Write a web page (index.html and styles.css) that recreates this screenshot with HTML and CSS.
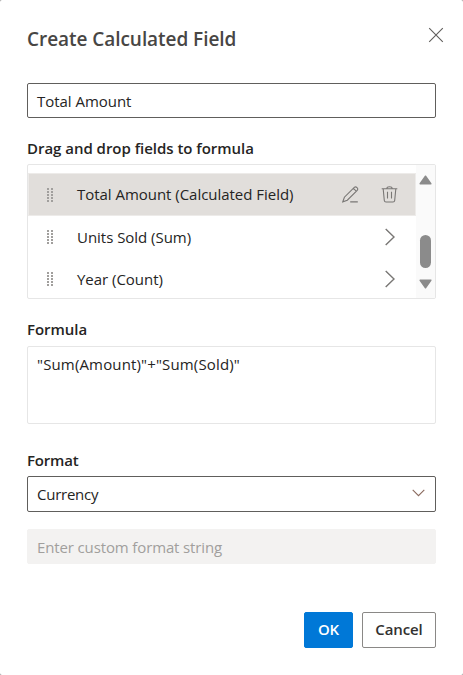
FILE: index.html
```html
<!DOCTYPE html>
<html lang="en">
<head>
<meta charset="utf-8">
<title>Create Calculated Field</title>
<link rel="stylesheet" href="styles.css">
</head>
<body>
<main class="dialog">
  <header class="header">
    <h1 class="title">Create Calculated Field</h1>
    <svg class="close" width="16" height="16" viewBox="0 0 16 16"><path d="M1.2 1.2 14.8 14.8M14.8 1.2 1.2 14.8"/></svg>
  </header>
  <div class="box name"><span>Total Amount</span></div>
  <h2 class="label label-fields">Drag and drop fields to formula</h2>
  <div class="list">
    <div class="rows">
      <div class="row selected">
        <svg class="grip" width="6" height="14" viewBox="0 0 6 14"><path d="M1 0V14M5 0V14"/></svg>
        <span class="text">Total Amount (Calculated Field)</span>
        <svg class="icon edit" width="17" height="17" viewBox="0 0 17 17"><path d="M.8 15.8 2.4 11.2 12.3 1.4Q13.6.3 15 1.6T15.2 4.3L5.3 14.2ZM11.4 2.4 14.2 5.2M8.2 15.9H15.8"/></svg>
        <svg class="icon" width="17" height="17" viewBox="0 0 17 17"><path d="M.7 2.8H16.3M5.8 2.5Q6 .8 8.5.8T11.2 2.5M2.2 3 3.3 14.5Q3.5 16 5 16H12Q13.5 16 13.7 14.5L14.8 3M6.5 5.7V12.5M10.5 5.7V12.5"/></svg>
      </div>
      <div class="row">
        <svg class="grip" width="6" height="14" viewBox="0 0 6 14"><path d="M1 0V14M5 0V14"/></svg>
        <span class="text">Units Sold (Sum)</span>
        <svg class="icon next" width="17" height="18" viewBox="0 0 17 18"><path d="M4.7 1 13 9 4.7 17"/></svg>
      </div>
      <div class="row">
        <svg class="grip" width="6" height="14" viewBox="0 0 6 14"><path d="M1 0V14M5 0V14"/></svg>
        <span class="text">Year (Count)</span>
        <svg class="icon next" width="17" height="18" viewBox="0 0 17 18"><path d="M4.7 1 13 9 4.7 17"/></svg>
      </div>
    </div>
    <div class="scrollbar">
      <svg width="13" height="10" viewBox="0 0 13 10"><path d="M6.5 1.2 11.8 8.8H1.2Z"/></svg>
      <div class="thumb"></div>
      <svg width="13" height="10" viewBox="0 0 13 10"><path d="M6.5 8.8 11.8 1.2H1.2Z"/></svg>
    </div>
  </div>
  <h2 class="label label-formula">Formula</h2>
  <div class="box formula"><span>"Sum(Amount)"+"Sum(Sold)"</span></div>
  <h2 class="label label-format">Format</h2>
  <div class="box select"><span>Currency</span><svg width="13" height="8" viewBox="0 0 13 8"><path d="M.7.8 6.5 6.6 12.3.8"/></svg></div>
  <div class="box custom"><span>Enter custom format string</span></div>
  <footer class="footer">
    <button class="button ok">OK</button>
    <button class="button cancel">Cancel</button>
  </footer>
</main>
</body>
</html>
```
FILE: styles.css
```css
* { box-sizing: border-box; }
body {
  margin: 0;
  background: #999;
  color: #252423;
  font: 15px/20px "Segoe UI", "Open Sans", sans-serif;
  letter-spacing: -0.03px;
}
.dialog {
  display: flex;
  flex-direction: column;
  width: 463px;
  height: 675px;
  padding: 27px 27px 0;
  border-radius: 2px;
  background: #fff;
}
.header {
  display: flex;
  justify-content: space-between;
  height: 56px;
  flex: none;
}
.title {
  margin: 0;
  color: #484644;
  font-size: 19px;
  line-height: 24px;
  font-weight: 600;
  letter-spacing: -0.05px;
}
.close { margin-right: -8px; fill: none; stroke: #605e5c; stroke-width: 1.1; }
.box {
  display: flex;
  align-items: center;
  flex: none;
  height: 35px;
  padding: 0 10px 0 9px;
  border: 1px solid #605e5c;
  border-radius: 2px;
}
.label {
  flex: none;
  height: 20px;
  margin: 0;
  font-size: 15px;
  line-height: 20px;
  font-weight: 600;
  letter-spacing: -0.03px;
}
.label-fields { margin: 20px 0 6px; }
.label-formula { margin: 20px 0 7px; }
.label-format { margin: 26px 0 6px; letter-spacing: -0.2px; }
.list {
  display: flex;
  flex: none;
  height: 135px;
  border: 1px solid #e6e6e6;
  border-radius: 2px;
  overflow: hidden;
}
.rows { flex: 1; padding-top: 8px; }
.row {
  display: flex;
  align-items: center;
  height: 42px;
  padding: 0 18px 0 19px;
}
.row.selected { height: 43px; background: #e1dedb; border: 1px solid #edebe9; padding: 0 17px 0 18px; }
.selected .text { margin-top: -2px; }
.grip { margin-right: 24px; fill: none; stroke: #a19f9d; stroke-width: 2; stroke-dasharray: 2 1; }
.text { flex: 1; white-space: nowrap; }
.icon { fill: none; stroke: #797775; stroke-width: 1.1; }
.edit { margin-right: 22px; }
.next { stroke-width: 1.4; }
.scrollbar {
  display: flex;
  flex-direction: column;
  align-items: center;
  width: 19px;
  padding: 10px 0 9px;
  background: #fafafa;
}
.scrollbar svg { fill: #8b8b8b; stroke: #8b8b8b; stroke-width: 1.5; stroke-linejoin: round; }
.thumb { width: 11px; height: 33px; margin: auto 0 11px; border-radius: 6px; background: #8b8b8b; }
.formula { height: 78px; align-items: flex-start; padding-top: 7px; border-color: #e6e6e6; letter-spacing: 0.15px; }
.select { height: 36px; justify-content: space-between; letter-spacing: -0.25px; }
.select svg { fill: none; stroke: #8a6a5e; stroke-width: 1.1; margin-top: -3px; }
.custom { margin-top: 17px; color: #a19f9d; background: #f3f2f1; border-color: #f3f2f1; letter-spacing: -0.13px; }
.footer { display: flex; justify-content: flex-end; gap: 9px; margin-top: 48px; }
.button {
  height: 36px;
  padding: 0 0 2px;
  border: 1px solid #8a8886;
  border-radius: 2px;
  background: #fff;
  color: #323130;
  font: 600 15px/20px "Segoe UI", "Open Sans", sans-serif;
  letter-spacing: -0.1px;
}
.ok { width: 49px; color: #fff; background: #0078d7; border-color: #0078d7; }
.cancel { width: 74px; }
```
